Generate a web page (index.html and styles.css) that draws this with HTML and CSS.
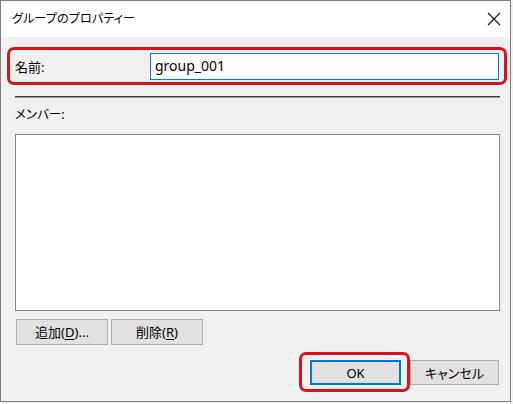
FILE: index.html
```html
<!DOCTYPE html>
<html lang="ja">
<head>
<meta charset="utf-8">
<title>グループのプロパティー</title>
<link rel="stylesheet" href="styles.css">
</head>
<body>
<div class="window">
  <div class="titlebar">
    <span class="title">グループのプロパティー</span>
    <svg class="close" width="14" height="14" viewBox="0 0 14 14" aria-label="閉じる">
      <path d="M1 1 L13 13 M13 1 L1 13" stroke="#1a1a1a" stroke-width="1.2" fill="none"/>
    </svg>
  </div>
  <div class="content">
    <div class="name-row highlight">
      <span class="label name-label">名前:</span>
      <div class="input">group_001</div>
    </div>
    <div class="separator"></div>
    <div class="label members-label">メンバー:</div>
    <div class="listbox"></div>
    <div class="list-buttons">
      <button class="btn">追加(<u>D</u>)...</button>
      <button class="btn">削除(<u>R</u>)</button>
    </div>
    <div class="footer">
      <button class="btn ok highlight">OK</button>
      <button class="btn cancel">キャンセル</button>
    </div>
  </div>
</div>
</body>
</html>
```
FILE: styles.css
```css
* { box-sizing: border-box; }
html, body { margin: 0; padding: 0; background: #f0f0f0; }
body {
  font-family: "Noto Sans", "Noto Sans CJK JP", sans-serif;
  font-size: 13px;
  color: #000;
  font-feature-settings: "palt";
}
.window {
  width: 511px;
  height: 402px;
  border: 1px solid #7f7f7f;
  background: #f0f0f0;
  display: flex;
  flex-direction: column;
}
.titlebar {
  height: 36px;
  background: #fff;
  display: flex;
  align-items: center;
  justify-content: space-between;
  padding: 0 9px 0 11px;
  flex: none;
}
.title { font-size: 12.2px; line-height: 18px; }
.close { display: block; }
.content {
  padding: 16px 10px 0 14px;
  display: flex;
  flex-direction: column;
}
.highlight { position: relative; }
.highlight::after {
  content: "";
  position: absolute;
  border: 3px solid #d7141c;
  border-radius: 7px;
  pointer-events: none;
}
.name-row {
  display: flex;
  align-items: center;
  height: 27px;
}
.name-row::after { left: -8px; right: -7px; top: -6px; bottom: -5px; }
.name-label { width: 135px; flex: none; }
.label { line-height: 18px; }
.members-label { font-size: 12.5px; }
.input {
  flex: 1;
  height: 27px;
  margin-right: 1px;
  border: 1px solid #0078d7;
  background: #fff;
  padding: 0 4px;
  font-size: 14px;
  line-height: 24px;
}
.separator {
  margin-top: 16px;
  height: 2px;
  border-top: 1px solid #3c3c3c;
  border-bottom: 1px solid #9a9a9a;
}
.members-label { margin: 8px 0 10px; }
.listbox {
  height: 177px;
  border: 1px solid #828790;
  background: #fff;
}
.list-buttons {
  display: flex;
  gap: 3px;
  margin-top: 8px;
  padding-left: 1px;
}
.btn {
  font: inherit;
  font-size: 13px;
  color: #000;
  background: #e1e1e1;
  border: 1px solid #adadad;
  height: 26px;
  width: 92px;
  padding: 0;
  line-height: 22px;
}
.btn u { text-decoration-thickness: 1px; text-underline-offset: 2px; }
.footer {
  display: flex;
  justify-content: flex-end;
  gap: 9px;
  margin-top: 15px;
  padding-right: 1px;
}
.ok {
  width: 91px;
  height: 25px;
  border: 2px solid #0078d7;
}
.ok::after { left: -13px; right: -11px; top: -10px; bottom: -9px; }
.cancel { width: 89px; height: 25px; }
```
